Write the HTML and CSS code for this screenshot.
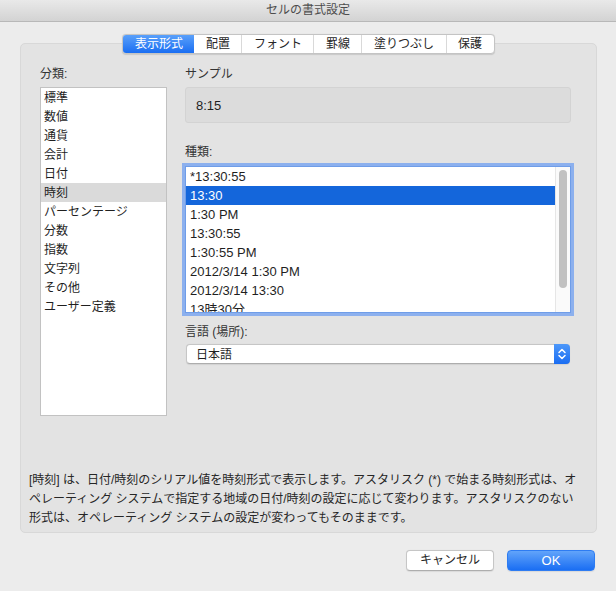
FILE: index.html
```html
<!DOCTYPE html>
<html lang="ja">
<head>
<meta charset="utf-8">
<title>セルの書式設定</title>
<link rel="stylesheet" href="styles.css">
</head>
<body>
<div class="window">
  <div class="titlebar">セルの書式設定</div>
  <div class="main">
    <div class="tabs">
      <div class="tab active">表示形式</div>
      <div class="tab">配置</div>
      <div class="tab">フォント</div>
      <div class="tab">罫線</div>
      <div class="tab">塗りつぶし</div>
      <div class="tab">保護</div>
    </div>
    <div class="group">
      <div class="columns">
        <div class="left-col">
          <div class="label">分類:</div>
          <div class="cat-list">
            <div class="cat">標準</div>
            <div class="cat">数値</div>
            <div class="cat">通貨</div>
            <div class="cat">会計</div>
            <div class="cat">日付</div>
            <div class="cat selected">時刻</div>
            <div class="cat">パーセンテージ</div>
            <div class="cat">分数</div>
            <div class="cat">指数</div>
            <div class="cat">文字列</div>
            <div class="cat">その他</div>
            <div class="cat">ユーザー定義</div>
          </div>
        </div>
        <div class="right-col">
          <div class="label">サンプル</div>
          <div class="sample">8:15</div>
          <div class="label label-type">種類:</div>
          <div class="type-list">
            <div class="type-rows">
              <div class="type">*13:30:55</div>
              <div class="type selected">13:30</div>
              <div class="type">1:30 PM</div>
              <div class="type">13:30:55</div>
              <div class="type">1:30:55 PM</div>
              <div class="type">2012/3/14 1:30 PM</div>
              <div class="type">2012/3/14 13:30</div>
              <div class="type">13時30分</div>
            </div>
            <div class="scrollbar"><div class="thumb"></div></div>
          </div>
          <div class="label label-lang">言語 (場所):</div>
          <div class="select">
            <span class="select-text">日本語</span>
            <span class="select-arrow">
              <svg width="16" height="20" viewBox="0 0 16 20"><path d="M5 8.5 L8 5.5 L11 8.5 M5 11.5 L8 14.5 L11 11.5" fill="none" stroke="#ffffff" stroke-width="1.5" stroke-linecap="round" stroke-linejoin="round"/></svg>
            </span>
          </div>
        </div>
      </div>
      <div class="desc">[時刻] は、日付/時刻のシリアル値を時刻形式で表示します。アスタリスク (*) で始まる時刻形式は、オ<br>ペレーティング システムで指定する地域の日付/時刻の設定に応じて変わります。アスタリスクのない<br>形式は、オペレーティング システムの設定が変わってもそのままです。</div>
    </div>
    <div class="buttons">
      <div class="btn">キャンセル</div>
      <div class="btn btn-primary">OK</div>
    </div>
  </div>
</div>
</body>
</html>
```
FILE: styles.css
```css
* { box-sizing: border-box; }
html, body {
  margin: 0;
  padding: 0;
  width: 616px;
  height: 591px;
  overflow: hidden;
  background: #ececec;
  font-family: "Liberation Sans", "Noto Sans CJK JP", sans-serif;
  font-size: 12px;
  color: #262626;
}
.window {
  width: 616px;
  height: 591px;
  display: flex;
  flex-direction: column;
}
.titlebar {
  height: 22px;
  line-height: 21px;
  text-align: center;
  color: #4d4d4d;
  font-size: 12px;
  background: linear-gradient(#e9e9e9, #d3d3d3);
  border-bottom: 1px solid #b8b8b8;
}
.main {
  display: flex;
  flex-direction: column;
  padding-top: 12px;
}
.tabs {
  align-self: center;
  display: flex;
  height: 20px;
  margin-left: 1px;
  margin-bottom: -11px;
  position: relative;
  z-index: 1;
  background: #ffffff;
  border: 1px solid #c4c4c4;
  border-radius: 4px;
  box-shadow: 0 0.5px 1px rgba(0,0,0,0.12);
  overflow: hidden;
}
.tab {
  padding: 0 11.5px;
  line-height: 18px;
  color: #262626;
  border-left: 1px solid #d9d9d9;
}
.tab:first-child { border-left: none; }
.tab.active {
  color: #ffffff;
  background: linear-gradient(#5aa0fa, #1a6ef2);
  border-left: none;
}
.tab.active + .tab { border-left: none; }
.group {
  margin-left: 20px;
  width: 577px;
  height: 490px;
  background: #e3e3e3;
  border: 1px solid #d8d8d8;
  border-radius: 5px;
  padding: 22px 0 0 19px;
  display: flex;
  flex-direction: column;
}
.columns {
  display: flex;
  gap: 18px;
}
.left-col { width: 127px; }
.right-col { width: 386px; display: flex; flex-direction: column; }
.label {
  line-height: 16px;
  color: #333333;
  height: 16px;
}
.cat-list {
  margin-top: 5px;
  height: 329px;
  background: #ffffff;
  border: 1px solid #c2c2c2;
}
.cat {
  height: 19px;
  line-height: 18px;
  padding: 1px 0 0 3px;
  color: #1f1f1f;
}
.cat.selected { background: #dadada; }
.sample {
  margin-top: 5px;
  height: 36px;
  background: #dcdcdc;
  border: 1px solid #d3d3d3;
  border-radius: 3px;
  padding: 2px 10px 0;
  line-height: 32px;
  font-size: 13px;
  color: #1f1f1f;
}
.label-type { margin-top: 21px; }
.type-list {
  margin-top: 6px;
  height: 147px;
  background: #ffffff;
  border: 1px solid #6f9de8;
  box-shadow: 0 0 0 3px #8cb0ee;
  display: flex;
  overflow: hidden;
}
.type-rows { width: 369px; }
.type {
  height: 19px;
  line-height: 18px;
  padding: 1px 0 0 4px;
  font-size: 13px;
  color: #1f1f1f;
  white-space: nowrap;
}
.type.selected { background: #1466db; color: #ffffff; }
.scrollbar {
  width: 15px;
  background: #fafafa;
  border-left: 1px solid #e6e6e6;
  padding: 3px 0 0 3px;
}
.thumb {
  width: 8px;
  height: 118px;
  border-radius: 4px;
  background: #c1c1c1;
}
.label-lang { margin-top: 11px; }
.select {
  margin: 4px 1px 0;
  height: 20px;
  background: #ffffff;
  border: 1px solid #c6c6c6;
  border-bottom-color: #adadad;
  border-radius: 4px;
  display: flex;
  align-items: stretch;
  box-shadow: 0 0.5px 1px rgba(0,0,0,0.08);
}
.select-text {
  flex: 1;
  padding: 1px 0 0 9px;
  line-height: 18px;
  color: #1f1f1f;
}
.select-arrow {
  width: 16px;
  margin: -1px -1px -1px 0;
  border-radius: 0 4px 4px 0;
  background: linear-gradient(#4d98fa, #1a6df2);
  display: flex;
  align-items: center;
  justify-content: center;
}
.select-arrow svg { display: block; }
.desc {
  margin-top: auto;
  margin-left: -11px;
  padding-bottom: 4px;
  line-height: 19px;
  color: #262626;
  white-space: nowrap;
}
.buttons {
  display: flex;
  justify-content: flex-end;
  gap: 13px;
  margin-top: 17px;
  padding-right: 21px;
}
.btn {
  width: 88px;
  height: 21px;
  line-height: 19px;
  text-align: center;
  background: #ffffff;
  border: 1px solid #c6c6c6;
  border-bottom-color: #adadad;
  border-radius: 4px;
  color: #262626;
  box-shadow: 0 0.5px 1px rgba(0,0,0,0.08);
}
.btn-primary {
  background: linear-gradient(#62a4fa, #1a6ef3);
  border-color: #2e7cf2;
  color: #ffffff;
  font-size: 13px;
}
```
